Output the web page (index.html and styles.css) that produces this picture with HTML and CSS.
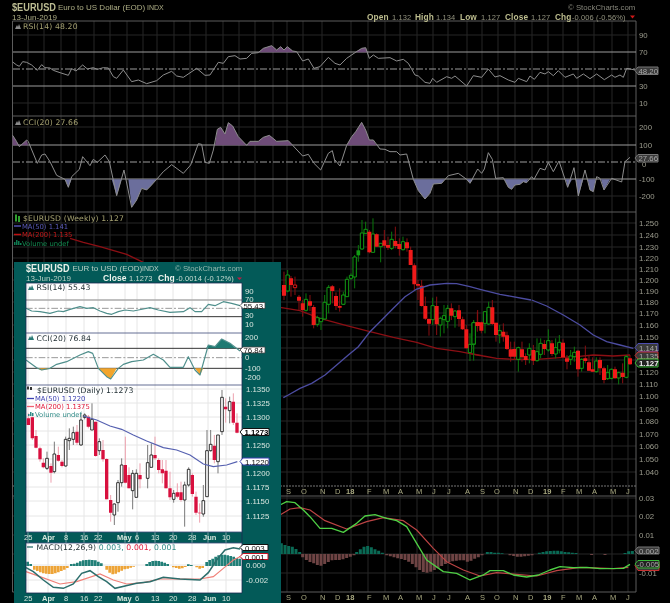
FILE: index.html
```html
<!DOCTYPE html>
<html lang="en">
<head>
<meta charset="utf-8">
<title>$EURUSD chart</title>
<link rel="stylesheet" href="styles.css">
</head>
<body>
<div class="stage">
<svg class="chart" viewBox="0 0 670 603" width="670" height="603" xmlns="http://www.w3.org/2000/svg">
  <path class="grid" d="M28 21V592M44 21V592M61 21V592M76 21V592M94 21V592M110 21V592M127 21V592M143 21V592M157 21V592M174 21V592M190 21V592M206 21V592M223 21V592M239 21V592M255 21V592M273 21V592M287 21V592M303 21V592M322 21V592M351 21V592M368 21V592M385 21V592M400 21V592M417 21V592M433 21V592M448 21V592M467 21V592M482 21V592M498 21V592M515 21V592M532 21V592M548 21V592M563 21V592M578 21V592M594 21V592M612 21V592M628 21V592"/>
  <path class="grid" d="M13 35H636M13 103H636M13 127H636M13 196H636M13 223H636M13 235H636M13 247H636M13 258H636M13 269H636M13 280H636M13 291H636M13 302H636M13 313H636M13 325H636M13 337H636M13 348H636M13 360H636M13 372H636M13 384H636M13 396H636M13 409H636M13 421H636M13 434H636M13 446H636M13 459H636M13 472H636M13 498H636M13 516H636M13 535H636M13 554H636M13 573H636"/>
  <path class="frame" d="M12.500 21H636V592H12.500ZM13 116H636M13 212H636M13 496H636"/>
  <path class="frame-dash" d="M13 486H636"/>
  <path class="level" d="M13 52H636M13 86H636M13 145H636M13 179H636"/>
  <path class="level-dash" d="M13 69H636M13 162H636"/>

  <text class="title" x="12" y="11" textLength="44" lengthAdjust="spacingAndGlyphs">$EURUSD</text>
  <text class="sub" x="58" y="10">Euro to US Dollar (EOD)</text>
  <text class="sub small" x="147" y="10">INDX</text>
  <text class="sub" x="12" y="20">13-Jun-2019</text>
  <text class="sub dim" x="568" y="10">© StockCharts.com</text>
  <text class="head" y="19.500"><tspan class="b" x="367">Open</tspan><tspan x="392">1.132</tspan><tspan class="b" x="415">High</tspan><tspan x="436">1.134</tspan><tspan class="b" x="460">Low</tspan><tspan x="481">1.127</tspan><tspan class="b" x="505">Close</tspan><tspan x="531">1.127</tspan><tspan class="b" x="555">Chg</tspan><tspan x="572">-0.006 (-0.56%)</tspan></text>
  <path class="down" d="M630 15.500h5l-2.500 3z"/>

  <path class="ico" d="M15 29l2-4 1 2 1-3 2 5z"/>
  <text class="leg" x="23" y="29">RSI(14) 48.20</text>
  <path class="ico" d="M15 125l2-4 1 2 1-3 2 5z"/>
  <text class="leg" x="23" y="125">CCI(20) 27.66</text>

  <g transform="scale(.33333)">
    <path class="up-fill" d="M775 157L790 145L815 137L830 150L842 140L852 150L862 140L878 153L890 157Z"/>
    <path class="ind" d="M38 186L50 195L58 199L68 185L80 187L95 195L112 211L125 194L135 203L150 204L160 211L180 218L205 226L215 206L228 213L248 195L262 207L280 203L292 208L310 203L325 204L340 230L350 235L370 210L395 245L415 240L440 251L470 242L490 225L515 214L530 228L550 232L590 205L615 226L630 225L655 187L670 190L685 170L705 167L720 177L740 175L755 160L775 158L790 145L815 137L830 150L842 140L852 150L862 140L878 153L890 155L908 183L925 177L942 205L960 200L985 172L1005 190"/>
    <path class="up-fill" d="M38 436V406L50 425L58 440L80 420L85 436ZM645 436L652 388L662 382L675 402L685 368L698 378L715 410L740 436L750 424L775 424L790 412L808 406L830 424L865 422L878 436Z"/>
    <path class="dn-fill" d="M195 538L205 562L215 538ZM335 538L350 587L365 538ZM385 538L395 622L410 600L425 565L440 570L452 558L470 538Z"/>
    <path class="ind" d="M38 406L50 425L58 440L80 420L85 425L112 490L125 465L135 462L150 485L170 526L195 538L205 562L215 530L238 508L248 470L270 497L280 478L292 487L315 465L328 485L350 587L372 510L395 622L410 600L425 565L440 570L452 558L470 538L490 515L515 494L550 520L572 495L595 431L605 433L615 487L628 490L640 450L652 388L662 382L675 402L685 368L698 378L715 410L740 436L750 424L775 424L790 412L808 406L830 424L865 422L878 436L908 468L925 463L942 490L962 510L985 460L997 452L1005 485"/>
  </g>
  <g transform="translate(335 0) scale(.33333)">
    <path class="up-fill" d="M60 157L80 145L92 143L98 157Z"/>
    <path class="ind" d="M0 190L15 195L35 175L60 158L80 145L92 143L103 175L115 165L130 175L165 173L185 183L205 178L220 190L240 225L250 228L270 247L285 250L293 235L305 247L335 230L350 235L360 228L395 258L415 227L440 232L460 207L480 231L495 227L520 240L540 247L550 235L575 245L585 228L598 238L615 217L630 222L640 215L655 227L670 212L690 232L715 222L725 235L745 222L765 236L785 222L808 239L830 225L840 232L855 225L865 232L875 205L900 210"/>
    <path class="up-fill" d="M35 436L50 410L62 395L80 367L92 390L103 420L115 420L125 436Z"/>
    <path class="dn-fill" d="M235 538L250 572L270 597L285 580L295 552L320 550L330 538ZM395 538L405 550L415 538ZM508 538L520 562L530 568L540 555L555 553L565 545L575 548L580 538ZM692 538L698 562L710 540L715 538ZM722 538L730 588L745 538ZM758 538L765 570L775 575L782 538ZM798 538L807 570L825 538Z"/>
    <path class="ind" d="M0 480L15 498L35 436L50 410L62 395L80 367L92 390L103 420L115 420L135 447L150 448L165 455L185 455L195 465L215 462L235 538L250 572L270 597L285 580L295 552L320 550L340 527L370 520L395 538L405 550L428 507L440 520L448 507L460 458L472 478L482 535L505 533L520 562L530 568L540 555L555 553L565 545L575 548L590 530L597 538L615 505L630 510L640 487L655 515L672 483L698 562L717 503L730 588L750 510L765 570L775 575L785 530L795 535L807 570L830 535L860 546L870 485L885 472"/>
  </g>

  <g transform="translate(0 205) scale(.33333)">
    <path class="ma200" d="M210 100L250 112L300 125L380 148L430 172"/>
  </g>
  <g transform="translate(280 205) scale(.33333)">
    <path class="ma200" d="M0 307L60 317L120 340L200 362L270 380L340 397L410 412L470 430L540 440L600 452"/>
    <path class="wick-g" d="M23 195V262M78 265V320M112 332V365M123 340V375M134 270V345M146 240V325M190 260V300M201 215V275M213 205V225M224 150V250M235 120V170M246 45V135M257 50V85M279 40V142M302 115V172M335 80V135M369 95V137M458 278V360M481 335V395M492 300V385M503 300V370M525 315V368M570 385V468M581 345V445"/>
    <path class="wick-r" d="M12 200V285M33 213V275M45 215V270M57 270V315M68 285V335M90 270V318M101 300V370M157 240V295M168 262V315M179 250V320M268 75V145M290 85V125M313 75V130M324 95V135M346 65V130M358 100V152M381 100V140M392 125V180M403 175V255M414 225V285M425 225V305M436 275V345M447 340V392M470 275V390M514 295V345M537 300V365M548 335V375M559 360V430M593 315V370"/>
    <path class="body-g" d="M18 210h10v48h-10zM73 283h10v33h-10zM107 338h10v20h-10zM118 340h10v10h-10zM129 292h10v50h-10zM141 247h10v51h-10zM185 270h10v28h-10zM196 223h10v52h-10zM208 211h10v9h-10zM219 156h10v60h-10zM241 84h10v48h-10zM252 73h10v12h-10zM274 87h10v55h-10zM297 115h10v10h-10zM330 103h10v27h-10zM364 110h10v24h-10zM453 302h10v42h-10zM476 340h10v20h-10zM487 332h10v12h-10zM498 310h10v39h-10zM520 318h10v17h-10zM565 418h10v25h-10zM576 353h10v65h-10z"/>
    <path class="solid-g" d="M235 136V151"/>
    <path class="hollow-r" d="M40 240h10v8h-10z"/>
    <path class="body-r" d="M12 240V272M33 220V240M57 275V287M68 295V315M90 289V302M101 306V360M157 244V258M168 273V303M179 303V308M268 80V142M290 88V125M313 106V122M324 120V128M346 108V123M358 117V132M381 112V130M392 135V180M403 181V238M414 237V242M425 242V303M436 303V341M447 342V356M470 303V358M514 310V332M537 316V342M548 343V373M559 373V430M593 352V360"/>
    <path class="ma50" d="M10 578L25 570L60 550L95 535L135 510L170 480L205 450L235 425L270 380L300 350L340 310L375 275L410 252L450 240L500 235L530 236L570 245L600 253L660 268L753 285"/>
  </g>
  <g transform="translate(470 300) scale(.33333)">
    <path class="ma200" d="M0 160L40 168L80 175L130 178L200 178L280 172L320 170L370 165L430 168L480 165"/>
    <path class="wick-g" d="M11 62V182M45 35V100M56 5V75M89 75V130M145 140V215M178 130V190M201 115V185M212 115V175M235 88V155M257 115V175M268 105V160M302 150V195M313 140V185M335 175V215M379 172V218M413 195V240M424 205V238M446 215V253M469 165V235"/>
    <path class="wick-r" d="M22 35V95M34 65V100M67 0V75M78 68V125M100 70V125M111 95V150M122 125V185M133 125V180M156 125V185M167 160V195M190 135V195M223 120V165M246 120V168M279 118V175M291 165V208M324 150V230M346 137V190M357 165V213M368 172V215M390 172V225M402 200V250M435 200V236M458 190V250M480 165V195"/>
    <path class="body-g" d="M6 68h10v64h-10zM40 35h10v35h-10zM51 22h10v50h-10zM84 92h10v13h-10zM140 143h10v35h-10zM173 145h10v20h-10zM196 155h10v27h-10zM207 130h10v33h-10zM230 122h10v28h-10zM252 143h10v19h-10zM263 127h10v23h-10zM297 168h10v10h-10zM308 157h10v13h-10zM330 178h10v27h-10zM374 183h10v32h-10zM408 218h10v18h-10zM419 208h10v27h-10zM441 218h10v16h-10zM464 170h10v62h-10z"/>
    <path class="body-r" d="M22 67V78M34 67V92M67 22V72M78 68V105M100 95V110M111 106V147M122 148V170M133 147V170M156 148V172M167 168V180M190 150V182M223 132V147M246 130V162M279 128V172M291 175V185M324 152V208M346 175V183M357 187V212M368 208V215M390 180V205M402 205V240M435 208V235M458 218V231M480 175V193"/>
    <path class="ma50" d="M185 0L230 18L280 45L330 75L370 105L410 125L450 135L490 145"/>
  </g>

  <g transform="translate(280 480) scale(.33333)">
    <path class="hist-up" d="M4 222V190M15 222V195M26 222V198M37 222V200M48 222V207M59 222V216M230 222V216M241 222V208M252 222V200M263 222V198M274 222V202M285 222V208M296 222V212M307 222V218M622 222V216M633 222V216M644 222V218M655 222V218M666 222V220M778 222V218M789 222V216M800 222V214M811 222V213M822 222V212M833 222V212M844 222V214M855 222V216M866 222V217M877 222V218M888 222V219M1035 222V219M1046 222V214M1057 222V213"/>
    <path class="hist-dn" d="M68 222V232M79 222V240M90 222V246M101 222V250M112 222V255M123 222V257M134 222V252M145 222V246M156 222V241M167 222V240M178 222V240M189 222V238M200 222V234M211 222V230M222 222V226M320 222V226M331 222V229M342 222V232M353 222V235M364 222V237M375 222V240M386 222V245M397 222V252M408 222V262M419 222V270M430 222V276M441 222V278M452 222V275M463 222V270M474 222V265M485 222V258M496 222V252M507 222V247M518 222V244M529 222V242M540 222V241M551 222V241M562 222V245M573 222V242M584 222V236M595 222V232M606 222V226M690 222V226M701 222V228M712 222V230M723 222V230M734 222V229M745 222V227M756 222V226M935 222V225M975 222V225"/>
    <path class="macd-r" d="M0 105L30 87L60 83L90 90L135 122L200 147L260 125L310 113L370 122L410 150L460 205L500 245L550 270L600 288L650 278L710 283L770 288L830 272L900 262L1000 266L1045 262"/>
    <path class="macd-g" d="M0 75L20 65L45 68L70 90L90 110L120 145L155 145L190 157L230 130L255 108L285 104L320 115L350 122L380 140L410 190L440 240L490 275L530 280L570 300L610 285L630 272L670 272L700 285L740 291L775 285L810 270L840 260L880 263L920 262L960 266L1030 265L1050 253"/>
  </g>

  <!-- main axis labels -->
  <g class="axis">
    <text x="639" y="38">90</text><text x="639" y="55">70</text><text x="639" y="89">30</text><text x="639" y="106">10</text>
    <text x="639" y="130">200</text><text x="639" y="148">100</text><text x="642" y="166.500">0</text><text x="639" y="182">-100</text><text x="639" y="199">-200</text>
    <text x="639" y="226">1.250</text><text x="639" y="238">1.240</text><text x="639" y="250">1.230</text><text x="639" y="261">1.220</text><text x="639" y="272">1.210</text><text x="639" y="283">1.200</text><text x="639" y="294">1.190</text><text x="639" y="305">1.180</text><text x="639" y="316">1.170</text><text x="639" y="328">1.160</text><text x="639" y="340">1.150</text><text x="639" y="375">1.120</text><text x="639" y="387">1.110</text><text x="639" y="399">1.100</text><text x="639" y="412">1.090</text><text x="639" y="424">1.080</text><text x="639" y="437">1.070</text><text x="639" y="449">1.060</text><text x="639" y="462">1.050</text><text x="639" y="475">1.040</text>
    <text x="639" y="501">0.03</text><text x="639" y="519">0.02</text><text x="639" y="538">0.01</text><text x="639" y="576">-0.01</text>
  </g>
  <g class="month">
    <text x="286" y="493.500">S</text><text x="301" y="493.500">O</text><text x="320" y="493.500">N</text><text x="335" y="493.500">D</text><text class="b" x="346" y="493.500">18</text><text x="367" y="493.500">F</text><text x="383" y="493.500">M</text><text x="398" y="493.500">A</text><text x="416" y="493.500">M</text><text x="432" y="493.500">J</text><text x="447" y="493.500">J</text><text x="465" y="493.500">A</text><text x="480" y="493.500">S</text><text x="494" y="493.500">O</text><text x="513" y="493.500">N</text><text x="528" y="493.500">D</text><text class="b" x="543" y="493.500">19</text><text x="561" y="493.500">F</text><text x="576" y="493.500">M</text><text x="592" y="493.500">A</text><text x="610" y="493.500">M</text><text x="626" y="493.500">J</text>
    <text x="286" y="600">S</text><text x="301" y="600">O</text><text x="320" y="600">N</text><text x="335" y="600">D</text><text class="b" x="346" y="600">18</text><text x="367" y="600">F</text><text x="383" y="600">M</text><text x="398" y="600">A</text><text x="416" y="600">M</text><text x="432" y="600">J</text><text x="447" y="600">J</text><text x="465" y="600">A</text><text x="480" y="600">S</text><text x="494" y="600">O</text><text x="513" y="600">N</text><text x="528" y="600">D</text><text class="b" x="543" y="600">19</text><text x="561" y="600">F</text><text x="576" y="600">M</text><text x="592" y="600">A</text><text x="610" y="600">M</text><text x="626" y="600">J</text>
  </g>

  <!-- value tags -->
  <path class="tag grey" d="M635 70.500l3-3.500h20v7.500h-20z"/><text class="tagt" x="638.500" y="73.500">48.20</text>
  <path class="tag grey" d="M635 158l3-3.500h20v7.500h-20z"/><text class="tagt" x="638.500" y="161">27.66</text>
  <path class="tag blue" d="M635 347.500l3-4h20v8h-20z"/><text class="tagt" x="639" y="350.500">1.141</text>
  <path class="tag red" d="M635 355.500l3-3.500h20v7h-20z"/><text class="tagt" x="639" y="358.500">1.135</text>
  <path class="tag green" d="M635 363l3-4h20v8h-20z"/><text class="tagt hi" x="639" y="366">1.127</text>
  <path class="tag grey" d="M635 550.500l3-3.500h21v7h-21z"/><text class="tagt" x="639" y="553.500">0.002</text>
  <path class="tag red" d="M635 565.500l3-3.500h21v8.500h-21z"/>
  <path class="tag green" d="M635 564l3-3.500h21v7.500h-21z"/><text class="tagt" x="637" y="567">-0.005</text>

  <!-- main legend -->
  <path class="ico-g" d="M15 214.500v7h2v-7zM18 216v6h2v-6z"/>
  <text class="leg" x="23" y="221">$EURUSD (Weekly) 1.127</text>
  <path class="ma-key blue-key" d="M14 226h7"/><text class="leg2 blue-t" x="22" y="228.500">MA(50) 1.141</text>
  <path class="ma-key red-key" d="M14 234.500h7"/><text class="leg2 red-t" x="22" y="237">MA(200) 1.135</text>
  <path class="ico-v" d="M14 245v-3h1.500v3zM16 245v-5h1.500v5zM18 245v-4h1.500v4zM20 245v-2h1.500v2z"/><text class="leg2 green-t" x="22" y="245.500">Volume undef</text>
</svg>

<svg class="inset" viewBox="14 262 267 341" width="267" height="341" xmlns="http://www.w3.org/2000/svg">
  <rect class="i-bg" x="14" y="262" width="267" height="341"/>
  <text class="i-title" x="26" y="271.500" textLength="43.500" lengthAdjust="spacingAndGlyphs">$EURUSD</text>
  <text class="i-sub" x="72.500" y="271">EUR to USD (EOD)</text>
  <text class="i-sub tiny" x="142" y="271">INDX</text>
  <text class="i-sub dim2" x="175" y="271">© StockCharts.com</text>
  <text class="i-sub" x="26" y="281">13-Jun-2019</text>
  <text class="i-head" y="281"><tspan class="b" x="103">Close</tspan><tspan x="129">1.1273</tspan><tspan class="b" x="158">Chg</tspan><tspan x="176">-0.0014 (-0.12%)</tspan></text>
  <path class="i-down" d="M237 277.500h5l-2.500 2.500z"/>

  <rect class="i-panel" x="26" y="283" width="216" height="50"/>
  <rect class="i-panel" x="26" y="333" width="216" height="52"/>
  <rect class="i-panel" x="26" y="385" width="216" height="147"/>
  <rect class="i-panel" x="26" y="543" width="216" height="50"/>
  <path class="i-grid" d="M28 283V593M48 283V593M66 283V593M84 283V593M98 283V593M125 283V593M137 283V593M155 283V593M173 283V593M192 283V593M208 283V593M226 283V593M26 389H242M26 403H242M26 417H242M26 431H242M26 445H242M26 459H242M26 473H242M26 487H242M26 501H242M26 516H242M26 565H242M26 580H242"/>
  <path class="i-cut" d="M28 532V543M48 532V543M66 532V543M84 532V543M98 532V543M125 532V543M137 532V543M155 532V543M173 532V543M192 532V543M208 532V543M226 532V543"/>

  <g transform="translate(0 205) scale(.33333)">
    <path class="i-l70" d="M78 285H727"/>
    <path class="i-lv" d="M78 335H727M78 430H727M78 490H727"/>
    <path class="i-dash" d="M78 310H727M78 458H727"/>
    <path class="i-teal" d="M618 430L625 420L645 425L665 402L690 415L707 430Z"/>
    <path class="i-orange" d="M110 490L125 496L150 491L155 490ZM296 490L320 515L332 522L350 490ZM585 490L600 510L610 490Z"/>
    <path class="i-ind" d="M78 310L95 318L120 320L150 325L175 318L190 320L210 313L240 305L260 310L280 308L300 318L320 325L335 328L355 320L375 315L400 318L430 312L450 308L475 315L510 322L550 320L570 308L585 320L605 320L625 298L645 302L670 290L695 295L720 302"/>
    <path class="i-ind" d="M78 465L110 488L125 495L150 490L170 478L200 470L240 450L265 440L278 445L295 490L320 515L332 522L355 490L370 478L395 470L430 465L460 448L490 465L510 487L550 487L565 455L585 495L600 510L625 420L645 425L665 402L690 415L720 438"/>
  </g>

  <g transform="translate(0 380) scale(.33333)">
    <path class="i-wick-h" d="M141 215V270M163 185V280M197 170V260M208 145V210M220 140V195M243 100V197M254 100V118M276 70V150M298 175V225M343 370V435M354 300V395M365 235V320M398 270V388M409 268V352M443 195V325M454 190V260M521 330V368M554 305V440M566 262V320M610 315V410M621 150V350M632 150V215M654 165V280M666 30V165M689 50V130"/>
    <path class="i-wick-r" d="M85 100V135M97 110V180M108 150V205M120 200V245M130 235V265M153 250V308M175 200V245M186 240V262M231 135V195M265 105V145M287 125V230M309 180V245M320 235V358M332 345V425M376 170V310M387 262V325M420 250V325M465 170V240M476 235V280M487 240V310M498 240V325M510 275V360M532 310V355M543 305V365M577 280V350M588 335V405M599 370V428M643 165V250M677 55V128M700 40V135M711 100V160"/>
    <path class="i-body-h" d="M137 235h8v30h-8zM159 222h8v53h-8zM193 178h8v80h-8zM204 175h8v7h-8zM216 158h8v20h-8zM239 120h8v75h-8zM250 105h8v7h-8zM272 118h8v32h-8zM294 185h8v27h-8zM339 372h8v33h-8zM350 308h8v60h-8zM361 255h8v53h-8zM394 280h8v52h-8zM405 280h8v72h-8zM439 248h8v47h-8zM450 225h8v37h-8zM517 340h8v18h-8zM550 315h8v45h-8zM562 268h8v47h-8zM606 362h8v40h-8zM617 212h8v138h-8zM628 193h8v19h-8zM650 165h8v80h-8zM662 52h8v103h-8zM685 65h8v27h-8z"/>
    <path class="i-body-r" d="M85 115V135M97 112V175M108 168V203M120 205V238M130 248V262M153 258V278M175 225V242M186 245V258M231 155V188M265 110V140M287 125V228M309 210V238M320 237V358M332 360V398M376 255V308M387 285V325M420 285V298M465 225V235M476 240V270M487 268V280M498 272V325M510 325V352M532 337V350M543 337V360M577 285V342M588 350V398M599 398V400M643 197V240M677 80V88M700 65V128M711 128V158"/>
    <path class="i-ma50" d="M250 108L290 120L330 138L365 148L400 165L440 183L490 203L530 210L570 225L610 252L640 260L680 255L712 245"/>

    <path class="i-hist-up" d="M83 558V545M92 558V552M214 558V552M223 558V551M232 558V548M241 558V544M250 558V541M259 558V540M268 558V539M277 558V540M286 558V541M295 558V545M304 558V550M440 558V552M449 558V546M458 558V543M467 558V542M476 558V543M485 558V545M494 558V548M503 558V552M565 558V553M574 558V555M620 558V546M629 558V540M638 558V536M647 558V530M656 558V526M665 558V524M674 558V524M683 558V526M692 558V528M701 558V530M710 558V534M719 558V536"/>
    <path class="i-hist-dn" d="M103 558V569M112 558V573M121 558V577M130 558V580M139 558V581M148 558V582M157 558V582M166 558V580M175 558V577M184 558V573M193 558V569M202 558V564M320 558V569M329 558V578M338 558V583M347 558V581M356 558V577M365 558V572M374 558V568M383 558V566M392 558V563M401 558V560M520 558V562M529 558V564M538 558V566M547 558V565M556 558V561M590 558V562M599 558V566M608 558V564"/>
    <path class="i-macd-r" d="M78 575L120 590L180 612L230 605L300 582L340 600L380 612L430 608L480 597L540 597L600 597L640 590L670 565L700 540L720 530"/>
    <path class="i-macd-t" d="M78 563L100 575L130 600L160 622L190 625L220 612L245 580L270 572L295 590L320 605L345 625L375 618L410 610L450 605L490 592L540 597L600 600L625 578L650 540L675 510L700 503L720 507"/>
  </g>

  <path class="i-frame" d="M26 283V593H242V283M26 283H242"/>
  <path class="i-frame2" d="M26 385H242M26 333H242M26 532H242M26 543H242"/>

  <!-- legends -->
  <path class="i-ico" d="M28 290l2-4 1 2 1-3 2 5z"/><text class="i-leg" x="36.500" y="290">RSI(14) 55.43</text>
  <path class="i-ico" d="M28 340l2-4 1 2 1-3 2 5z"/><text class="i-leg" x="36.500" y="341">CCI(20) 76.84</text>
  <path class="i-key" d="M27 386.500v3h2v-3zM30 387v3h2v-3z"/><text class="i-leg" x="37" y="393">$EURUSD (Daily) 1.1273</text>
  <path class="i-ma" d="M27 398.500h7"/><text class="i-leg2 i-blue" x="35" y="401">MA(50) 1.1220</text>
  <path class="i-mar" d="M27 406.500h7"/><text class="i-leg2 i-red" x="35" y="409">MA(200) 1.1375</text>
  <path class="i-vol" d="M28 416v-2h1.500v2zM30 416v-4h1.500v4zM32 416v-3h1.500v3z"/><text class="i-leg2 i-tl" x="35" y="416.500">Volume undef</text>
  <path class="i-macd-key" d="M27 547h6"/><text class="i-leg" x="36.500" y="550">MACD(12,26,9) <tspan class="i-tl">0.003,</tspan> <tspan class="i-red">0.001,</tspan> <tspan class="i-tl">0.001</tspan></text>

  <g class="i-axis">
    <text x="245" y="294">90</text><text x="245" y="302">70</text><text x="245" y="318">30</text><text x="245" y="327">10</text>
    <text x="245" y="340">200</text><text x="245" y="360">0</text><text x="245" y="371">-100</text><text x="245" y="380">-200</text>
    <text x="246" y="392">1.1350</text><text x="246" y="406">1.1325</text><text x="246" y="420">1.1300</text><text x="246" y="448">1.1250</text><text x="246" y="476">1.1200</text><text x="246" y="490">1.1175</text><text x="246" y="504">1.1150</text><text x="246" y="519">1.1125</text>
    <text x="246" y="568">0.000</text><text x="246" y="582.500">-0.002</text>
  </g>
  <g class="i-month">
    <text x="24" y="540">25</text><text class="b" x="42" y="540">Apr</text><text x="64" y="540">8</text><text x="80" y="540">16</text><text x="94" y="540">22</text><text class="b" x="117" y="540">May</text><text x="135" y="540">6</text><text x="151" y="540">13</text><text x="169" y="540">20</text><text x="188" y="540">28</text><text class="b" x="203" y="540">Jun</text><text x="222" y="540">10</text>
    <text x="24" y="601">25</text><text class="b" x="42" y="601">Apr</text><text x="64" y="601">8</text><text x="80" y="601">16</text><text x="94" y="601">22</text><text class="b" x="117" y="601">May</text><text x="135" y="601">6</text><text x="151" y="601">13</text><text x="169" y="601">20</text><text x="188" y="601">28</text><text class="b" x="203" y="601">Jun</text><text x="222" y="601">10</text>
  </g>

  <path class="i-tag" d="M240 305.500l3-3h22v6h-22z"/><text class="i-tagt" x="243.500" y="308.500">55.43</text>
  <path class="i-tag" d="M240 350l3-3h22v6h-22z"/><text class="i-tagt" x="243.500" y="353">76.84</text>
  <path class="i-tag2" d="M240 432l3-3.500h26v7h-26z"/><text class="i-tagb" x="244.500" y="435">1.1273</text>
  <path class="i-tag3" d="M240 461.500l3-3.500h26v7h-26z"/><text class="i-tagt" x="245" y="464.500">1.1220</text>
  <path class="i-tag2" d="M240 547.500l3-3h25v6h-25z"/><text class="i-tagt" x="245" y="550.500">0.003</text>
  <path class="i-tag4" d="M240 556.500l3-3h25v6h-25z"/><text class="i-tagt" x="245" y="559.500">0.001</text>
</svg>
</div>
</body>
</html>
```
FILE: styles.css
```css
html, body { margin: 0; background: #000; }
.stage { position: relative; width: 670px; height: 603px; overflow: hidden; background: #000; filter: blur(.35px); }
.chart { display: block; }
.inset { position: absolute; left: 14px; top: 262px; }
svg path { fill: none; }
svg text { font-family: "Liberation Sans", Arial, sans-serif; }
.grid { stroke: #262626; stroke-width: 1; }
.frame { stroke: #5c5c5c; stroke-width: 1; }
.frame-dash { stroke: #777; stroke-width: 1; stroke-dasharray: 2 1; }
.level { stroke: #9c9c9c; stroke-width: 1; }
.level-dash { stroke: #9c9c9c; stroke-width: 1; stroke-dasharray: 7 2 2 2; }
.title { font-size: 11px; font-weight: 700; fill: #bcbc92; }
.sub { font-size: 8px; fill: #aeae86; }
.sub.small { font-size: 7px; }
.sub.dim { fill: #85857a; font-size: 7.800px; }
.head { font-size: 7.500px; fill: #93937f; letter-spacing: .1px; }
.head .b { font-weight: 700; font-size: 8.300px; fill: #bdbd8e; }
.down { fill: #d01818; }
.ico { fill: #8a8a8a; }
.leg { font-family: "DejaVu Sans", sans-serif; font-size: 7.700px; fill: #a4a070; letter-spacing: .15px; }
.leg2 { font-family: "DejaVu Sans", sans-serif; font-size: 6.800px; }
.blue-t { fill: #5a5ab8; }
.red-t { fill: #c01818; }
.green-t { fill: #128a50; }
.up-fill { fill: #6e4c78; stroke: none; }
.dn-fill { fill: #6b6e9c; stroke: none; }
.ind { stroke: #8e8e8e; stroke-width: 3; stroke-linejoin: round; }
.ma200 { stroke: #8c0f14; stroke-width: 4; }
.ma50 { stroke: #4c4ca0; stroke-width: 4; }
.wick-g { stroke: #0a780c; stroke-width: 3; }
.wick-r { stroke: #8a0f12; stroke-width: 3; }
.body-g { fill: #000; stroke: #129a14; stroke-width: 3; }
.solid-g { stroke: #129a14; stroke-width: 11; }
.hollow-r { fill: #000; stroke: #d81818; stroke-width: 3; }
.body-r { stroke: #f01a1a; stroke-width: 12; }
.hist-up { stroke: #0a6a55; stroke-width: 9; }
.hist-dn { stroke: #6e4444; stroke-width: 9; }
.macd-r { stroke: #bc4444; stroke-width: 3.500; stroke-linejoin: round; }
.macd-g { stroke: #4fd045; stroke-width: 4; stroke-linejoin: round; }
.axis text { font-size: 7.800px; fill: #9c9c8e; }
.month text { font-size: 7.500px; fill: #a8a880; }
.b { font-weight: 700; }
.tag { fill: #3a3a3a; stroke-width: 1; }
.tag.grey { stroke: #777; }
.tag.blue { stroke: #4c4cb0; }
.tag.red { stroke: #c83030; }
.tag.green { stroke: #38b838; fill: #222; }
.tagt { font-size: 7.800px; fill: #aaa; }
.tagt.hi { fill: #eee; font-weight: 700; }
.ico-g { fill: #30a030; }
.ma-key { stroke-width: 1.500; }
.blue-key { stroke: #5050b0; }
.red-key { stroke: #c01010; }
.ico-v { fill: #0e7a50; }

.i-bg { fill: #035a58; }
.i-title { font-size: 11px; font-weight: 700; fill: #e8f0e8; }
.i-sub { font-size: 8px; fill: #b8cfc4; }
.i-sub.tiny { font-size: 7px; }
.i-sub.dim2 { fill: #96b8ae; font-size: 7.800px; }
.i-head { font-size: 7.500px; fill: #c8dcd2; letter-spacing: .1px; }
.i-head .b { font-weight: 700; font-size: 8.500px; fill: #eef4ee; }
.i-down { fill: #c81840; }
.i-panel { fill: #fff; }
.i-grid { stroke: #e6e6e6; stroke-width: 1; }
.i-cut { stroke: #035a58; stroke-width: 1; }
.i-frame { stroke: #1c2a50; stroke-width: .8; }
.i-frame2 { stroke: #3c4a7a; stroke-width: .8; }
.i-l70 { stroke: #aaa; stroke-width: 5; }
.i-lv { stroke: #333; stroke-width: 3; }
.i-dash { stroke: #999; stroke-width: 3; stroke-dasharray: 20 6 6 6; }
.i-teal { fill: #1e7a72; stroke: none; }
.i-orange { fill: #f2a52c; stroke: none; }
.i-ind { stroke: #4f8f8c; stroke-width: 3.500; stroke-linejoin: round; }
.i-wick-h { stroke: #777; stroke-width: 3; }
.i-wick-r { stroke: #eda0ae; stroke-width: 3; }
.i-body-h { fill: #fff; stroke: #111; stroke-width: 2.500; }
.i-body-r { stroke: #d8103e; stroke-width: 10; }
.i-ma50 { stroke: #5560b0; stroke-width: 3.500; }
.i-hist-up { stroke: #217f77; stroke-width: 8; }
.i-hist-dn { stroke: #eda437; stroke-width: 8; }
.i-macd-r { stroke: #f08078; stroke-width: 3.500; }
.i-macd-t { stroke: #2c6e6c; stroke-width: 4.500; }
.i-ico { fill: #2a7a76; }
.i-leg { font-family: "DejaVu Sans", sans-serif; font-size: 7.700px; fill: #1d2b30; letter-spacing: .1px; }
.i-leg2 { font-family: "DejaVu Sans", sans-serif; font-size: 6.800px; }
.i-blue { fill: #3a3fb0; }
.i-red { fill: #e01838; }
.i-tl { fill: #2f8a86; }
.i-key { fill: #333; }
.i-ma { stroke: #3a3fb0; stroke-width: 1.300; }
.i-mar { stroke: #f06070; stroke-width: 1.300; }
.i-vol { fill: #2f8a86; }
.i-macd-key { stroke: #2c6e6c; stroke-width: 1.300; }
.i-axis text { font-size: 7.800px; fill: #d8e6df; }
.i-month text { font-size: 7.500px; fill: #d6e6dc; }
.i-tag { fill: #fff; stroke: #444; stroke-width: .8; }
.i-tag2 { fill: #fff; stroke: #111; stroke-width: 1; }
.i-tag3 { fill: #fff; stroke: #3a3fb0; stroke-width: 1; }
.i-tag4 { fill: #fff; stroke: #c81020; stroke-width: 1; }
.i-tagt { font-size: 7.800px; fill: #111; }
.i-tagb { font-size: 7.800px; font-weight: 700; fill: #000; }
```
